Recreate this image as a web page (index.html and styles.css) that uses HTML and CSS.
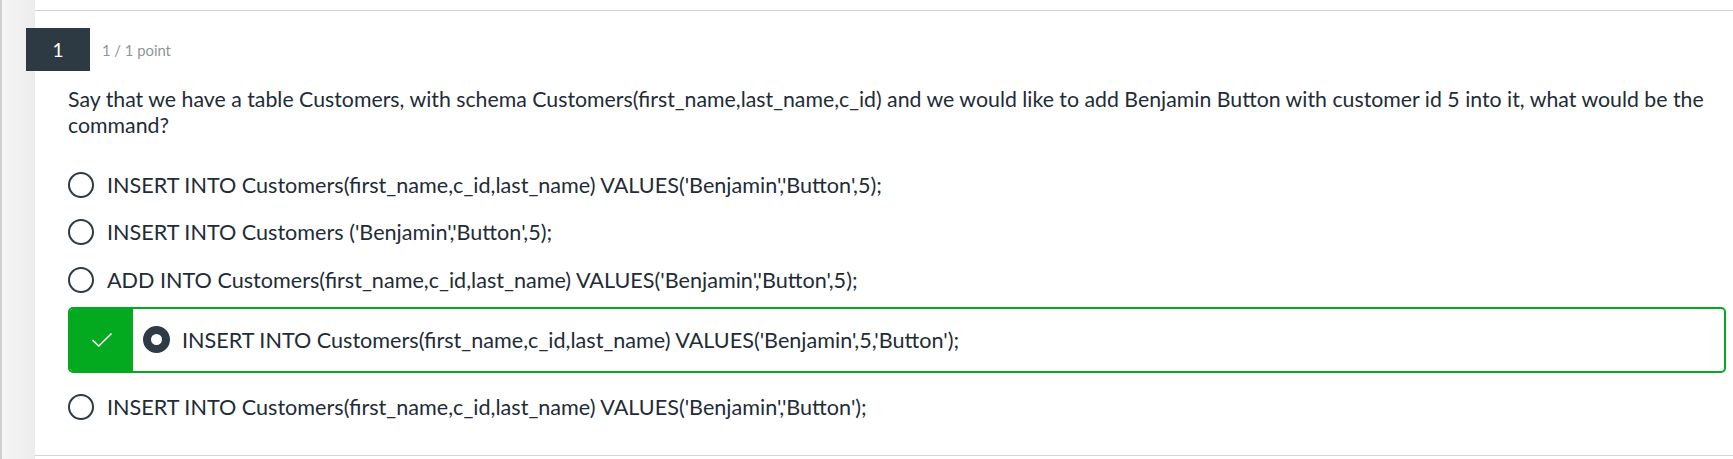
FILE: index.html
```html
<!DOCTYPE html>
<html>
<head>
<meta charset="utf-8">
<link rel="stylesheet" href="styles.css">
</head>
<body>
<div class="page">
  <div class="rail"></div>
  <div class="main">
    <div class="head">
      <div class="badge">1</div>
      <div class="points">1 / 1 point</div>
    </div>
    <div class="body">
      <p class="question">Say that we have a table Customers, with schema Customers(first_name,last_name,c_id) and we would like to add Benjamin Button with customer id 5 into it, what would be the command?</p>
      <div class="options">
        <div class="opt"><span class="radio"></span><span class="label">INSERT INTO Customers(first_name,c_id,last_name) VALUES('Benjamin','Button',5);</span></div>
        <div class="opt"><span class="radio"></span><span class="label">INSERT INTO Customers ('Benjamin','Button',5);</span></div>
        <div class="opt"><span class="radio"></span><span class="label">ADD INTO Customers(first_name,c_id,last_name) VALUES('Benjamin','Button',5);</span></div>
        <div class="opt correct">
          <span class="mark"><svg width="22" height="16" viewBox="0 0 22 16"><path d="M1.5 8.2 L7.8 14 L20.5 1.5" fill="none" stroke="#fff" stroke-width="1.6"/></svg></span>
          <span class="radio selected"></span><span class="label">INSERT INTO Customers(first_name,c_id,last_name) VALUES('Benjamin',5,'Button');</span>
        </div>
        <div class="opt"><span class="radio"></span><span class="label">INSERT INTO Customers(first_name,c_id,last_name) VALUES('Benjamin','Button');</span></div>
      </div>
    </div>
  </div>
</div>
</body>
</html>
```
FILE: styles.css
```css
html, body {
  margin: 0;
  padding: 0;
  background: #fff;
}
body {
  font-family: Lato, "Open Sans", sans-serif;
  color: #222c37;
}
.page {
  display: flex;
  height: 459px;
}
.rail {
  width: 35px;
  flex: none;
  background: linear-gradient(to right, #cfcfcf 0, #cfcfcf 2px, #f5f5f5 2px, #ececec 100%);
}
.main {
  flex: 1;
  margin-top: 10px;
  height: 444px;
  border-top: 1px solid #d4d4d4;
  border-bottom: 1px solid #d4d4d4;
}
.head {
  display: flex;
  align-items: center;
  padding-top: 17px;
  margin-left: -9px;
}
.badge {
  width: 64px;
  height: 43px;
  background: #2e3a43;
  color: #fff;
  font-size: 19px;
  display: flex;
  align-items: center;
  justify-content: center;
}
.points {
  margin-left: 12px;
  font-size: 14.8px;
  color: #8e959c;
}
.body {
  padding-left: 33px;
  padding-right: 7px;
}
.question {
  margin: 16px 0 0;
  font-size: 21.3px;
  line-height: 25.5px;
}
.options {
  margin-top: 23px;
  display: flex;
  flex-direction: column;
}
.opt {
  display: flex;
  align-items: center;
  height: 47.5px;
  font-size: 21.6px;
}
.radio {
  box-sizing: border-box;
  width: 26px;
  height: 26px;
  border: 2px solid #2e3a44;
  border-radius: 50%;
  flex: none;
  margin-right: 13px;
}
.radio.selected {
  width: 27px;
  height: 27px;
  border-width: 8px;
  margin-right: 12px;
}
.opt.correct {
  box-sizing: border-box;
  height: 66px;
  margin-top: 3px;
  margin-bottom: 11px;
  border: 2px solid #03a91e;
  border-radius: 5px;
  overflow: hidden;
}
.mark {
  width: 63px;
  align-self: stretch;
  background: #03a91e;
  display: flex;
  align-items: center;
  justify-content: center;
  margin-right: 10px;
  padding-top: 1px;
}
```
